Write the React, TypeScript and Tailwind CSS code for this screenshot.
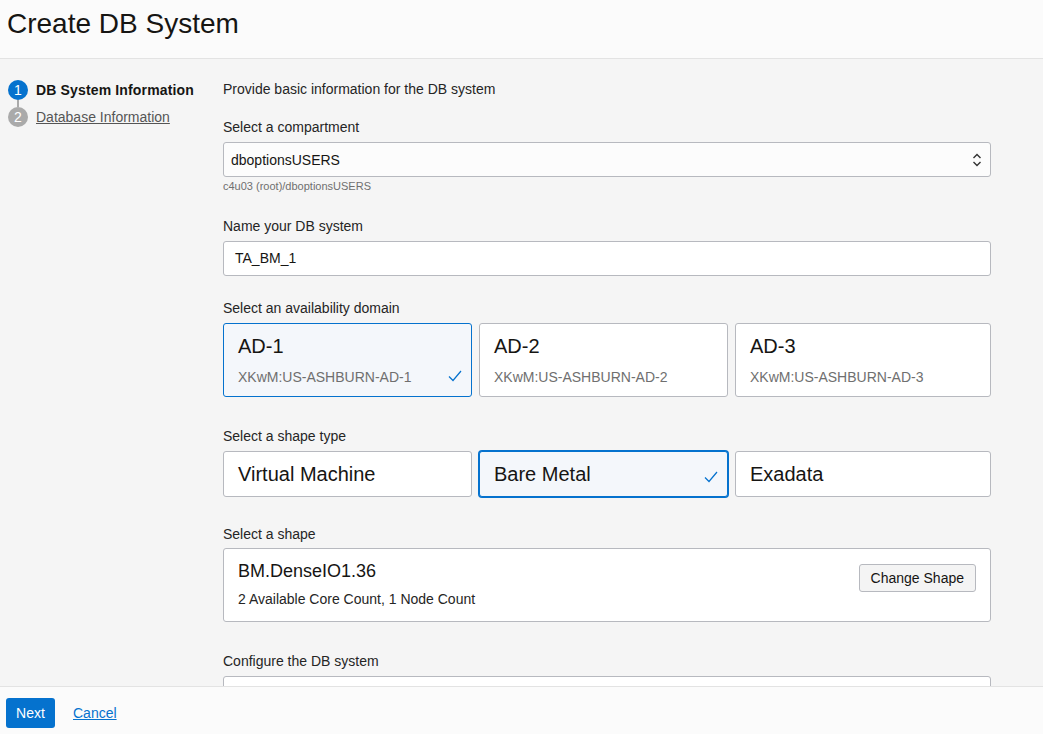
import React from "react";

const font = { fontFamily: '"Liberation Sans", Arial, sans-serif' };

function Check({ className }: { className?: string }) {
  return (
    <svg viewBox="0 0 14 12" className={className} fill="none">
      <polyline points="1,6.5 5,10.5 13,1" stroke="#0572ce" strokeWidth="1.2" />
    </svg>
  );
}

function Label({ children, className = "" }: { children: React.ReactNode; className?: string }) {
  return <div className={`text-[14px] leading-4 text-[#252525] mb-[7px] ${className}`}>{children}</div>;
}

const domains = ["AD-1", "AD-2", "AD-3"];
const shapeTypes = ["Virtual Machine", "Bare Metal", "Exadata"];

export default function App() {
  return (
    <div style={font} className="h-[734px] flex flex-col bg-[#f5f5f5] text-[#161513] overflow-hidden">
      <header className="h-[59px] shrink-0 bg-[#fbfbfb] border-b border-[#e3e3e3] px-[7px] flex items-center">
        <h1 className="text-[28px] leading-8 text-[#161513] -mt-[11px]">Create DB System</h1>
      </header>

      <div className="flex-1 flex overflow-hidden">
        <nav className="w-[223px] shrink-0 pl-[8px] pt-[21px]">
          <div className="flex items-center h-[20px]">
            <span className="w-[20px] h-[20px] rounded-full bg-[#0572ce] text-white text-[14px] flex items-center justify-center">1</span>
            <span className="ml-[8px] text-[14px] font-bold tracking-[0.15px] text-[#161513]">DB System Information</span>
          </div>
          <div className="w-[2px] h-[7px] bg-[#aaaaaa] ml-[9px]" />
          <div className="flex items-center h-[20px]">
            <span className="w-[20px] h-[20px] rounded-full bg-[#aaaaaa] text-white text-[14px] flex items-center justify-center">2</span>
            <span className="ml-[8px] text-[14px] text-[#555555] underline">Database Information</span>
          </div>
        </nav>

        <main className="w-[768px] pt-[22px]">
          <div className="text-[14px] leading-4 text-[#252525]">Provide basic information for the DB system</div>

          <Label className="mt-[22px]">Select a compartment</Label>
          <div className="h-[35px] bg-[#fcfcfc] border border-[#b7b9bf] rounded-[3px] flex items-center justify-between pl-[7px] pr-[8px]">
            <span className="text-[14px] text-[#161513] mt-[2px]">dboptionsUSERS</span>
            <svg viewBox="0 0 10 14" className="w-[10px] h-[14px]" fill="none" stroke="#333" strokeWidth="1.4">
              <polyline points="1.5,5 5,1.5 8.5,5" />
              <polyline points="1.5,9 5,12.5 8.5,9" />
            </svg>
          </div>
          <div className="text-[11px] leading-[13px] text-[#6f6f6f] mt-[3px]">c4u03 (root)/dboptionsUSERS</div>

          <Label className="mt-[25px]">Name your DB system</Label>
          <div className="h-[35px] bg-white border border-[#b7b9bf] rounded-[3px] flex items-center px-[11px]">
            <span className="text-[14px] text-[#161513]">TA_BM_1</span>
          </div>

          <Label className="mt-[24px]">Select an availability domain</Label>
          <div className="grid grid-cols-[249px_249px_1fr] gap-[7px]">
            {domains.map((d, i) => {
              const sel = i === 0;
              return (
                <div
                  key={d}
                  className={`relative h-[74px] rounded-[3px] border px-[14px] pt-[10px] ${
                    sel ? "border-[#0572ce] bg-[#f4f7fb]" : "border-[#b7b9bf] bg-white"
                  }`}
                >
                  <div className="text-[20px] leading-6 text-[#161513]">{d}</div>
                  <div className="text-[14px] leading-4 text-[#6f6f6f] mt-[11px]">XKwM:US-ASHBURN-{d}</div>
                  {sel && <Check className="absolute right-[9px] top-[46px] w-[14px] h-[12px]" />}
                </div>
              );
            })}
          </div>

          <Label className="mt-[31px]">Select a shape type</Label>
          <div className="grid grid-cols-[249px_249px_1fr] gap-[7px]">
            {shapeTypes.map((s, i) => {
              const sel = i === 1;
              return (
                <div
                  key={s}
                  className={`relative h-[46px] rounded-[3px] border px-[14px] flex items-center ${
                    sel
                      ? "border-[#0572ce] bg-[#f4f7fb] shadow-[0_0_0_1px_#0572ce]"
                      : "border-[#b7b9bf] bg-white"
                  }`}
                >
                  <span className="text-[20px] leading-6 text-[#161513]">{s}</span>
                  {sel && <Check className="absolute right-[9px] top-[19px] w-[14px] h-[12px]" />}
                </div>
              );
            })}
          </div>

          <Label className="mt-[29px] !mb-[6px]">Select a shape</Label>
          <div className="h-[74px] bg-white border border-[#b7b9bf] rounded-[3px] flex justify-between pl-[14px] pr-[14px]">
            <div className="pt-[11px]">
              <div className="text-[18px] leading-[22px] text-[#161513]">BM.DenseIO1.36</div>
              <div className="text-[14px] leading-4 text-[#252525] mt-[9px]">2 Available Core Count, 1 Node Count</div>
            </div>
            <button className="mt-[15px] h-[28px] px-[11px] bg-[#f4f4f4] border border-[#b7b9bf] rounded-[3px] text-[14px] text-[#161513]">
              Change Shape
            </button>
          </div>

          <Label className="mt-[31px]">Configure the DB system</Label>
          <div className="h-[60px] bg-white border border-[#b7b9bf] rounded-[3px]" />
        </main>
      </div>

      <footer className="h-[48px] shrink-0 bg-[#fbfbfb] border-t border-[#e3e3e3] flex items-start pt-[11px] px-[6px]">
        <button className="h-[30px] w-[49px] bg-[#0572ce] rounded-[3px] text-white text-[14px]">Next</button>
        <a className="ml-[18px] mt-[7px] text-[14px] leading-4 text-[#0572ce] underline">Cancel</a>
      </footer>
    </div>
  );
}
